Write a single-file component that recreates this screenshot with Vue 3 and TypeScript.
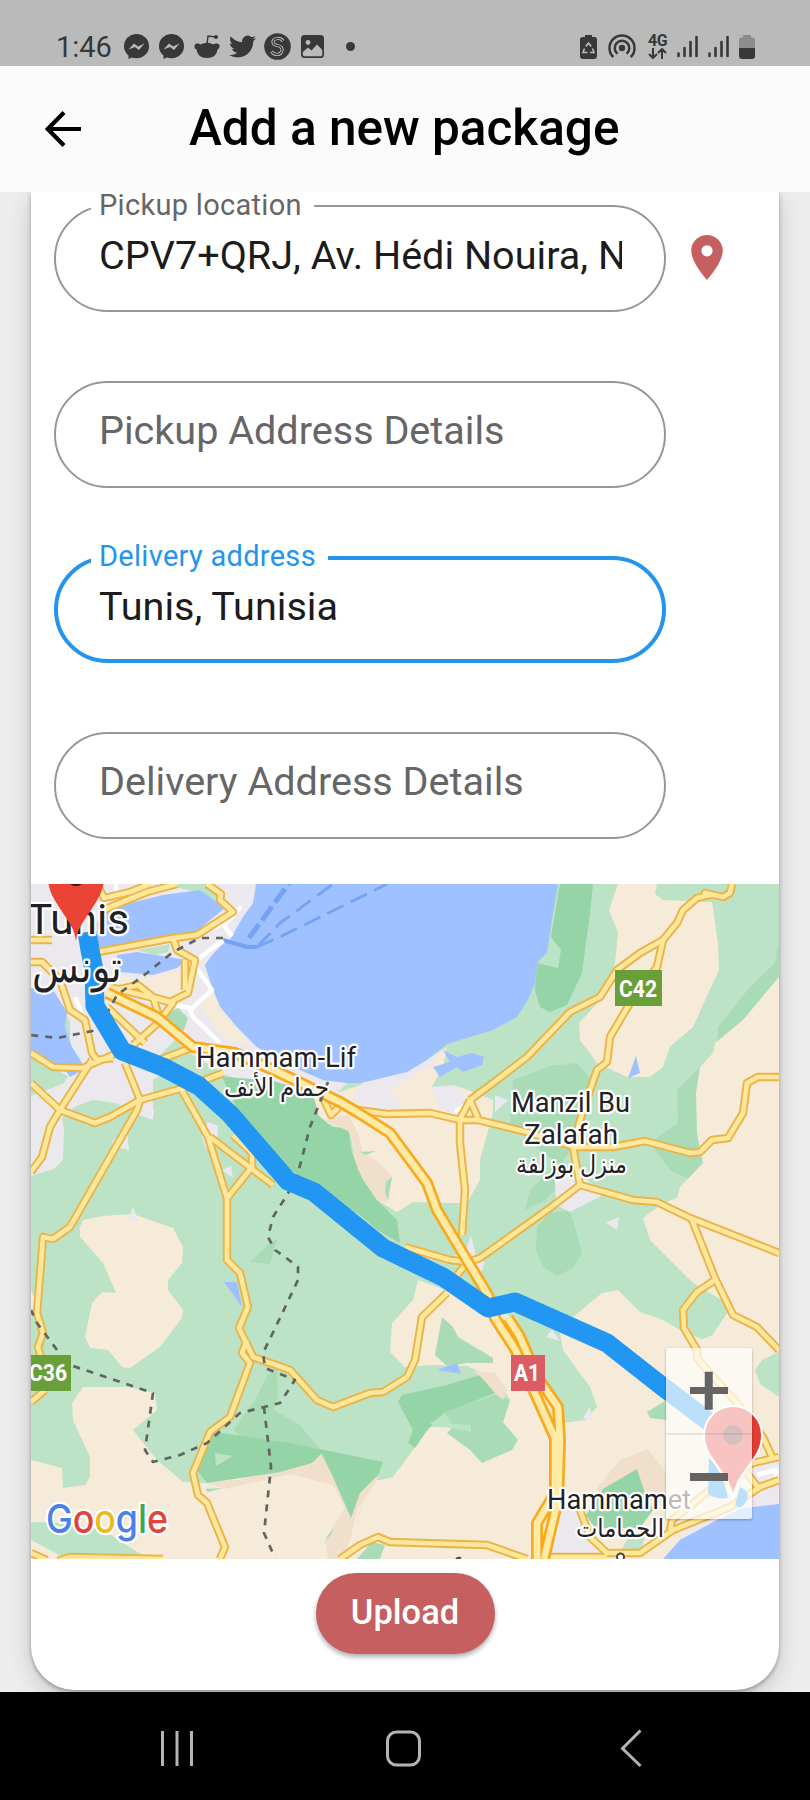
<script setup lang="ts">
interface Field {
  text: string
  label?: string
  active?: boolean
  filled?: boolean
  pin?: boolean
}

interface Shape {
  kind: string
  points: string
}

const fields: Field[] = [
  { text: 'CPV7+QRJ, Av. Hédi Nouira, Nabeul', label: 'Pickup location', filled: true, pin: true },
  { text: 'Pickup Address Details' },
  { text: 'Tunis, Tunisia', label: 'Delivery address', filled: true, active: true },
  { text: 'Delivery Address Details' },
]

const land: Shape[] = [
  { kind: 'urban', points: '31,884 262,884 256,905 243,917 230,940 205,965 212,987 237,1027 257,1047 300,1070 323,1080 347,1083 330,1100 280,1090 225,1075 190,1053 153,1080 153,1120 130,1112 93,1112 64,1130 63,1160 54,1169 31,1176' },
  { kind: 'green', points: '62,1118 76,1106 93,1100 115,1103 132,1110 120,1122 64,1130' },
  { kind: 'green', points: '31,1055 50,1067 68,1076 64,1083 42,1092 31,1096' },
  { kind: 'green', points: '163,884 212,884 222,905 200,893' },
  { kind: 'green', points: '137,950 170,944 168,952 155,955' },
  { kind: 'green', points: '64,1010 70,1022 70,1040 63,1030' },
  { kind: 'mid', points: '168,1013 178,1008 188,1018 184,1030 173,1030 167,1022' },
  { kind: 'green', points: '153,1062 175,1040 192,1055 192,1072 168,1068' },
  { kind: 'sand', points: '110,973 140,980 176,970 184,975 184,993 172,1000 150,990 118,988' },
  { kind: 'sand', points: '200,1005 212,990 226,1017 250,1045 225,1040' },
  { kind: 'sand', points: '360,1085 407,1072 447,1047 443,1067 432,1087 460,1087 493,1100 493,1113 480,1160 480,1180 467,1203 447,1203 413,1202 397,1212 377,1200 357,1170 350,1133 320,1120 313,1093 340,1092' },
  { kind: 'urban', points: '352,1100 362,1083 407,1072 443,1050 430,1067 390,1090 403,1107 388,1112' },
  { kind: 'urban', points: '432,1087 456,1085 466,1097 462,1118 440,1110' },
  { kind: 'forest', points: '222,1077 270,1080 313,1093 318,1115 332,1127 348,1128 352,1153 363,1180 377,1200 397,1220 400,1243 377,1230 360,1215 320,1192 285,1165 240,1115' },
  { kind: 'urban', points: '290,1072 323,1080 352,1102 320,1098' },
  { kind: 'dune', points: '324,1120 348,1115 358,1133 363,1153 380,1163 392,1177 387,1203 377,1200 358,1170 350,1132' },
  { kind: 'mid', points: '360,1152 376,1151 366,1155' },
  { kind: 'mid', points: '386,1182 392,1177 388,1200 385,1192' },
  { kind: 'forest', points: '560,884 593,884 590,913 582,973 567,1005 550,1012 540,1007 535,990 537,963 558,968 561,950 551,937' },
  { kind: 'sand', points: '618,884 657,884 655,894 663,900 712,902 718,943 719,970 702,1007 693,1027 670,1047 663,1067 650,1077 627,1077 597,1063 580,1040 579,1023 603,997 615,963 618,933 609,910' },
  { kind: 'mid', points: '779,943 779,977 743,1020 717,1043 718,1027 750,987 774,964' },
  { kind: 'mid', points: '700,1067 677,1090 678,1123 650,1143 670,1170 690,1180 703,1163 697,1133' },
  { kind: 'mid', points: '513,1080 550,1066 577,1063 590,1078 585,1130 560,1165 540,1150 510,1125' },
  { kind: 'mid', points: '552,1168 530,1190 525,1210 545,1200 565,1180' },
  { kind: 'sand', points: '779,977 743,1020 715,1043 713,1053 700,1067 696,1093 697,1133 703,1163 680,1187 677,1198 663,1203 643,1218 650,1240 693,1283 700,1297 727,1303 727,1313 712,1335 702,1339 680,1330 663,1320 640,1312 618,1290 602,1293 573,1317 560,1333 563,1350 590,1387 597,1407 585,1420 563,1423 550,1400 530,1350 505,1310 488,1305 418,1280 413,1300 392,1323 390,1352 405,1367 430,1365 467,1366 498,1380 510,1400 503,1422 480,1440 453,1427 430,1427 413,1450 393,1477 380,1480 365,1480 320,1470 280,1473 203,1483 183,1482 157,1460 133,1430 157,1410 155,1393 128,1387 110,1387 83,1387 72,1403 73,1420 90,1457 90,1477 85,1485 63,1488 62,1468 31,1460 31,1559 779,1559' },
  { kind: 'green', points: '693,1283 727,1303 727,1313 712,1335 702,1339 680,1330 684,1300' },
  { kind: 'sand', points: '80,1227 83,1220 103,1216 133,1214 173,1228 183,1247 182,1263 168,1280 168,1290 183,1310 182,1318 160,1347 130,1368 122,1367 108,1350 90,1348 85,1337 92,1303 102,1292 116,1293 103,1263 80,1237' },
  { kind: 'sand', points: '31,1290 35,1300 33,1312 31,1315' },
  { kind: 'urban', points: '128,1220 133,1207 139,1222' },
  { kind: 'urban', points: '112,1142 127,1128 129,1150 115,1147' },
  { kind: 'urban', points: '202,1137 208,1122 218,1126 217,1140 206,1149' },
  { kind: 'urban', points: '222,1170 231,1166 233,1178' },
  { kind: 'urban', points: '136,1110 154,1110 154,1116' },
  { kind: 'green', points: '31,1522 63,1523 103,1530 147,1558 63,1557 31,1540' },
  { kind: 'green', points: '200,1432 230,1415 310,1423 383,1462 383,1478 320,1452 203,1483' },
  { kind: 'mid', points: '233,1430 255,1400 267,1376 277,1366 278,1395 274,1410 300,1425 320,1449 290,1443 240,1436' },
  { kind: 'dune', points: '205,1482 240,1480 320,1452 333,1477 352,1515 365,1480 380,1476 357,1510 350,1540 345,1559 328,1559 325,1540 345,1508 333,1485 290,1474 225,1489' },
  { kind: 'forest', points: '215,1432 290,1443 383,1462 378,1475 360,1493 351,1518 333,1477 322,1453 312,1463 280,1472 207,1483 197,1470 202,1448' },
  { kind: 'green', points: '215,1453 233,1456 216,1466' },
  { kind: 'mid', points: '205,1489 223,1488 208,1492' },
  { kind: 'mid', points: '360,1510 363,1498 356,1528' },
  { kind: 'mid', points: '325,1540 334,1527 331,1535' },
  { kind: 'mid', points: '357,1559 372,1542 385,1545 380,1559' },
  { kind: 'forest', points: '398,1402 402,1395 447,1385 480,1375 495,1393 447,1412 427,1430 415,1448 408,1443 413,1430' },
  { kind: 'mid', points: '442,1413 495,1395 510,1400 503,1422 518,1440 512,1450 482,1463 470,1450 447,1433 453,1427' },
  { kind: 'green', points: '430,1424 445,1413 452,1424 471,1425 471,1432 450,1428' },
  { kind: 'mid', points: '442,1317 453,1327 458,1337 493,1358 493,1363 467,1363 447,1366 435,1355' },
  { kind: 'dune', points: '472,1371 495,1373 507,1390 503,1400 496,1394 480,1376' },
  { kind: 'mid', points: '537,1227 550,1213 570,1210 576,1230 582,1253 573,1268 557,1276 543,1267 536,1250' },
  { kind: 'urban', points: '555,1180 577,1172 605,1194 570,1212 556,1205' },
  { kind: 'urban', points: '606,1223 619,1217 617,1230' },
  { kind: 'urban', points: '546,1337 552,1330 560,1341' },
  { kind: 'urban', points: '583,1418 590,1407 592,1421' },
  { kind: 'urban', points: '495,1095 508,1100 495,1112' },
  { kind: 'urban', points: '455,1255 466,1250 471,1236 476,1256 485,1262 481,1272 462,1266' },
  { kind: 'green', points: '348,1285 358,1277 357,1293' },
  { kind: 'mid', points: '250,1262 268,1245 278,1238 270,1264' },
  { kind: 'dune', points: '597,1488 620,1460 648,1449 668,1475 668,1510 650,1500 600,1500' },
  { kind: 'forest', points: '603,1489 637,1469 645,1493 653,1510 640,1528 595,1528 586,1515' },
  { kind: 'mid', points: '647,1412 667,1400 667,1420 650,1418' },
  { kind: 'green', points: '755,1370 762,1360 779,1352 779,1397 760,1384' },
  { kind: 'urban', points: '562,1500 580,1518 592,1540 605,1559 547,1559' },
  { kind: 'urban', points: '663,1559 690,1525 740,1500 750,1470 779,1458 779,1504 743,1508' },
  { kind: 'green', points: '630,1535 645,1535 640,1555 620,1552' },
  { kind: 'water', points: '256,884 253,903 243,917 230,940 222,945 212,955 205,965 212,987 220,1007 237,1027 257,1047 300,1070 323,1080 347,1083 360,1083 407,1072 427,1060 447,1044 493,1030 517,1017 528,1000 535,983 537,963 547,952 552,920 558,884' },
  { kind: 'water', points: '102,910 163,895 200,890 225,908 210,920 197,932 170,935 98,948 97,923' },
  { kind: 'water', points: '117,955 137,952 187,960 177,968 153,975 120,972' },
  { kind: 'water', points: '31,988 53,990 67,1012 65,1027 72,1047 82,1063 83,1070 70,1077 63,1067 47,1065 31,1053' },
  { kind: 'water', points: '433,1067 450,1062 443,1050 457,1057 472,1053 484,1057 482,1065 463,1072 457,1067 440,1077' },
  { kind: 'water', points: '628,1078 636,1056 640,1073' },
  { kind: 'water', points: '224,1282 237,1282 242,1307' },
  { kind: 'water', points: '437,1370 457,1363 461,1374' },
  { kind: 'water', points: '663,1559 680,1540 717,1520 743,1508 779,1504 779,1559' },
]

const whiteRoads: string[] = [
  '223,940 193,963 212,990 190,1010 193,1017 220,1043',
  '75,997 83,1017',
  '197,935 217,927 240,908 224,926 232,936',
  '455,1112 464,1106',
  '165,1003 190,1008',
  '116,884 116,895',
  '560,1505 556,1530 549,1550',
  '757,1475 776,1470 776,1480',
]

const roads: string[] = [
  '125,1063 140,1100 137,1110 70,1227 53,1239 43,1237 37,1313 43,1333 38,1347 41,1357',
  '45,1390 31,1402',
  '31,1083 60,1110 95,1123 110,1117 140,1100 187,1087 223,1073',
  '180,1087 193,1110 208,1137 227,1198 227,1260 240,1273 248,1307 239,1328 253,1357 290,1370 317,1400 333,1407 370,1393 383,1392 407,1377 415,1360 422,1317 447,1293',
  '247,1340 242,1353 250,1363 230,1417 210,1432 193,1473 198,1495 207,1503 225,1547 220,1559',
  '210,1137 273,1185',
  '228,1197 252,1167 252,1153 233,1135',
  '470,1100 493,1083 527,1057 570,1012 600,997 617,970 640,953 663,940 677,923 683,910 697,898 710,895 705,893 723,897 730,893 732,884',
  '663,940 657,967 630,1003 610,1037 607,1062 597,1070 590,1090 580,1120 573,1147 580,1185',
  '357,1110 387,1114 430,1113 460,1120 478,1120 527,1132 575,1147 613,1147 645,1141 690,1153 700,1152 712,1140 728,1138 743,1113 747,1083 758,1077 779,1077',
  '470,1100 460,1119 460,1143 465,1190 462,1235',
  '470,1100 478,1118',
  '324,1100 331,1115 343,1103',
  '468,1262 480,1258 550,1208 580,1185 633,1200 657,1202 690,1218 779,1253',
  '692,1220 715,1278 733,1315 757,1327 779,1350',
  '715,1280 697,1292 683,1310 684,1328 697,1350 697,1358 707,1370 737,1403 763,1437 772,1457',
  '405,1247 450,1260 468,1262 457,1275',
  '340,1559 360,1545 378,1537 390,1542 487,1545 527,1559',
  '31,1553 47,1560',
  '58,1561 70,1557 163,1559',
  '580,1510 590,1537 607,1553 640,1553 673,1530 730,1507 760,1487 779,1480',
  '547,1557 607,1557',
  '670,1530 672,1520 710,1490 753,1463 779,1457',
  '747,1473 760,1490',
  '98,952 173,938 197,935 233,912 220,900 221,894 207,884',
  '173,938 177,950 195,960 188,993 170,1002 153,997 138,985 115,990',
  '185,960 185,990',
  '103,910 147,892 177,884',
  '97,884 104,898 130,892 150,884',
  '107,1007 145,1043',
  '110,987 173,1003 158,1023 133,1045',
  '153,997 160,1020',
  '31,962 42,962 60,980 70,1010 85,1020 92,1053 97,1060 113,1058',
  '31,940 52,940',
  '31,1053 53,1067 83,1068 117,1053',
  '92,1060 60,1110 50,1127 42,1157 31,1172',
  '193,1047 160,1060',
]

const highways: string[] = [
  '107,993 157,1017 193,1047 235,1053 280,1073 340,1102 357,1112 390,1133 427,1183 437,1210 468,1262 488,1295 495,1318 515,1349 555,1438 555,1493 537,1523 537,1559',
  '508,1318 519,1335 538,1378 558,1407 560,1440 558,1500 544,1559',
]

const borders: string[] = [
  '223,938 200,938 173,952 147,973 117,995 110,1008 97,1030 57,1038 31,1035',
  '328,1082 310,1127 297,1177 287,1195 273,1217 268,1237 275,1250 285,1257 298,1267 298,1280 280,1318 263,1353 265,1368 295,1380 280,1403 264,1407 240,1413 207,1443 180,1455 153,1462 145,1450 153,1393 70,1365',
  '57,1350 37,1323 31,1310',
  '264,1407 271,1467 264,1533 275,1558',
]

const ferries: string[] = [
  '258,946 280,923 333,884',
  '257,947 280,937 387,884',
]

const route = '87,932 90,950 94,970 95,1006 122,1051 163,1067 199,1086 230,1114 288,1181 314,1192 383,1248 443,1277 488,1308 515,1302 607,1343 663,1387 712,1424 735,1442'
</script>

<template>
  <div class="screen">
    <header class="status">
      <span class="clock">1:46</span>
      <svg v-for="n in 2" :key="n" class="glyph messenger" viewBox="0 0 25 25">
        <path d="M12.5 0A12 12 0 0 1 25 12.200A12 12 0 0 1 12.500 24.200Q9.500 24.200 7.800 23.500L4.500 25V21.500A12 12 0 0 1 0 12.200A12 12 0 0 1 12.500 0Z" fill="#383838" />
        <path d="M4.500 15.500L10 9.500L14 12.500L20.500 9.500L15 16L11 13Z" fill="#bababa" />
      </svg>
      <svg class="glyph reddit" viewBox="0 0 26 25">
        <path d="M2.500 9.500Q5 9 6.500 10.500Q9.500 8.800 13 8.800T19.500 10.500Q21 9 23.500 9.500Q26 10.500 25.500 13Q25 15 23.500 15.500Q22.500 24 13 24T2.500 15.500Q1 15 0.500 13Q0 10.500 2.500 9.500Z" fill="#383838" />
        <path d="M13 10L14 2L22 3" fill="none" stroke="#383838" stroke-width="1.500" />
        <circle cx="22" cy="3" r="2" fill="#383838" />
      </svg>
      <svg class="glyph twitter" viewBox="0 2 24 20">
        <path fill="#383838" d="M23.950 4.570a10 10 0 0 1-2.820.775 4.960 4.960 0 0 0 2.160-2.723c-.950.555-2.005.959-3.127 1.184a4.920 4.920 0 0 0-8.384 4.482C7.690 8.095 4.067 6.130 1.640 3.162a4.820 4.820 0 0 0-.666 2.475c0 1.710.870 3.213 2.188 4.096a4.900 4.900 0 0 1-2.228-.616v.060a4.920 4.920 0 0 0 3.946 4.827 5 5 0 0 1-2.212.085 4.940 4.940 0 0 0 4.604 3.417 9.870 9.870 0 0 1-6.102 2.105c-.390 0-.779-.023-1.170-.067a14 14 0 0 0 7.557 2.209c9.053 0 13.998-7.496 13.998-13.985 0-.210 0-.420-.015-.630a9.900 9.900 0 0 0 2.460-2.548z" />
      </svg>
      <svg class="glyph coin" viewBox="0 0 27 27">
        <circle cx="13.500" cy="13.500" r="13.300" fill="#383838" />
        <path d="M19 8Q17 5 13.500 5.500Q8.500 6 9 9.500Q9.500 12 13.500 12.500Q18.500 13.500 18 17.500Q17 21.500 13 21.500Q9.500 21.500 7.500 18.500" fill="none" stroke="#bababa" stroke-width="3.200" />
        <path d="M19 8Q17 5 13.500 5.500Q8.500 6 9 9.500Q9.500 12 13.500 12.500Q18.500 13.500 18 17.500Q17 21.500 13 21.500Q9.500 21.500 7.500 18.500" fill="none" stroke="#383838" stroke-width="1.300" />
      </svg>
      <svg class="glyph photo" viewBox="0 0 23 23">
        <rect width="23" height="23" rx="3.500" fill="#383838" />
        <circle cx="7" cy="7.500" r="2.400" fill="#bababa" />
        <path d="M1.800 17L7 12.500L10.500 15.500L16 9.500L21.300 15V19.500Q21.300 21.300 19.500 21.300H3.500Q1.800 21.300 1.800 19.500Z" fill="#bababa" />
      </svg>
      <span class="dot"></span>
      <span class="spacer"></span>
      <svg class="saver" viewBox="0 0 17 24">
        <path d="M5 0H12V2H14.500Q17 2 17 4.500V21Q17 24 14 24H3Q0 24 0 21V4.500Q0 2 2.500 2H5Z" fill="#383838" />
        <path d="M5.800 11.500L8.500 8L11.200 11.500M12.500 13.500L14 17.500H10M7.500 17.500H3L4.500 13.500" fill="none" stroke="#bababa" stroke-width="1.600" />
      </svg>
      <svg class="hotspot" viewBox="0 0 28 25" fill="none" stroke="#383838" stroke-width="2.500">
        <circle cx="14" cy="14" r="3.200" fill="#383838" stroke="none" />
        <path d="M9.500 19.800A7.300 7.300 0 1 1 18.500 19.800M5.300 23A12.500 12.500 0 1 1 22.700 23" />
      </svg>
      <div class="network">
        <span>4G</span>
        <svg viewBox="0 0 19 11" fill="none" stroke="#383838" stroke-width="2"><path d="M5 0V10M1 6L5 10L9 6M14 11V1M10 5L14 1L18 5" /></svg>
      </div>
      <svg v-for="n in 2" :key="n" class="signal" viewBox="0 0 21 23" stroke="#383838" stroke-width="2.600" stroke-linecap="round">
        <path d="M1.500 18.500V21M7.500 13V21M13.500 7V21M19.500 2V21" />
      </svg>
      <svg class="battery" viewBox="0 0 16 24">
        <path d="M4 0H12V2.500H14Q16 2.500 16 4.500V13H0V4.500Q0 2.500 2 2.500H4Z" fill="#8c8c8c" />
        <path d="M0 13H16V21Q16 24 13 24H3Q0 24 0 21Z" fill="#383838" />
      </svg>
    </header>

    <div class="appbar">
      <svg class="back" viewBox="0 0 36 36" fill="none" stroke="#000" stroke-width="4.200"><path d="M36 18H3M19 1.500L2.700 18L19 34.500" /></svg>
      <h1>Add a new package</h1>
    </div>

    <main class="content">
      <section class="card">
        <div class="form">
          <div v-for="f in fields" :key="f.text" class="row">
            <div class="field" :class="{ active: f.active, filled: f.filled }">
              <span v-if="f.label" class="label">{{ f.label }}</span>
              <span class="value">{{ f.text }}</span>
            </div>
            <svg v-if="f.pin" class="place" viewBox="5 2 14 20">
              <path fill="#c66060" d="M12 2C8.130 2 5 5.130 5 9c0 5.250 7 13 7 13s7-7.750 7-13c0-3.870-3.130-7-7-7zm0 9.500a2.500 2.500 0 0 1 0-5 2.500 2.500 0 0 1 0 5z" />
            </svg>
          </div>
        </div>

        <div class="map">
          <svg class="canvas" viewBox="31 884 748 675">
            <rect class="green" x="31" y="884" width="748" height="675" />
            <polygon v-for="(s, i) in land" :key="i" :class="s.kind" :points="s.points" />
            <g class="lines">
              <polyline class="ferry-port" points="223,940 247,947 257,947" />
              <polyline class="ferry-main" points="249,938 290,882" />
              <polyline v-for="p in ferries" :key="p" class="ferry" :points="p" />
              <polyline v-for="p in whiteRoads" :key="p" class="white-road" :points="p" />
              <polyline v-for="p in roads" :key="p" class="road-edge" :points="p" />
              <polyline v-for="p in roads" :key="p" class="road" :points="p" />
              <polyline v-for="p in highways" :key="p" class="highway-edge" :points="p" />
              <polyline v-for="p in highways" :key="p" class="highway" :points="p" />
              <polyline v-for="p in borders" :key="p" class="border" :points="p" />
              <polyline class="route" :points="route" />
            </g>
            <path d="M709 1458Q722 1470 728 1498Q712 1500 708 1493ZM740 1487Q748 1490 748 1497Q742 1512 735 1505Z" fill="#2196f3" />

            <rect x="615" y="970" width="47" height="36" fill="#689f38" />
            <rect x="31" y="1355" width="40" height="36" fill="#689f38" />
            <rect x="511" y="1355" width="34" height="36" fill="#db5c62" />
            <g class="shield">
              <text x="619" y="997" textLength="38" lengthAdjust="spacingAndGlyphs">C42</text>
              <text x="29" y="1381" textLength="38" lengthAdjust="spacingAndGlyphs">C36</text>
              <text x="514" y="1381" textLength="26" lengthAdjust="spacingAndGlyphs">A1</text>
            </g>

            <circle cx="620.500" cy="1557" r="3.500" fill="#fff" stroke="#444" stroke-width="2" />
            <path d="M456 1559Q458 1557 461 1558" fill="none" stroke="#444" stroke-width="2" />
            <g class="place-name">
              <text class="city" x="27" y="934" textLength="102" lengthAdjust="spacingAndGlyphs">Tunis</text>
              <text class="city" x="32" y="982" direction="ltr" textLength="90" lengthAdjust="spacingAndGlyphs">تونس</text>
              <text x="196" y="1066.500" textLength="160" lengthAdjust="spacingAndGlyphs">Hammam-Lif</text>
              <text class="arabic" x="224" y="1096" direction="ltr" textLength="105" lengthAdjust="spacingAndGlyphs">حمام الأنف</text>
              <text x="511" y="1112" textLength="119" lengthAdjust="spacingAndGlyphs">Manzil Bu</text>
              <text x="524" y="1144" textLength="94" lengthAdjust="spacingAndGlyphs">Zalafah</text>
              <text class="arabic" x="516" y="1173" direction="ltr" textLength="111" lengthAdjust="spacingAndGlyphs">منزل بوزلفة</text>
              <text x="547" y="1509" textLength="144" lengthAdjust="spacingAndGlyphs">Hammamet</text>
              <text class="arabic" x="576" y="1537" direction="ltr" textLength="88" lengthAdjust="spacingAndGlyphs">الحمامات</text>
            </g>

            <g stroke-linejoin="round">
              <path d="M76 941C74 927 68 921 61 910S48 891 48 877A28 28 0 0 1 104 877C104 891 98 899 91 910S78 927 76 941Z" fill="#ea4335" />
              <circle cx="76" cy="876" r="10" fill="#3b0e0b" />
              <path d="M733 1499C731 1485 726 1478 718 1467S704 1449 704 1435A29 29 0 0 1 762 1435C762 1449 756 1456 748 1467S735 1485 733 1499Z" fill="#e53b35" stroke="#fff" stroke-width="2" />
              <circle cx="733" cy="1435" r="10" fill="#7d2a28" />
            </g>

            <text class="google" x="46" y="1533" textLength="122" lengthAdjust="spacingAndGlyphs"><tspan fill="#4a80e8">G</tspan><tspan fill="#e0443a">o</tspan><tspan fill="#ecb921">o</tspan><tspan fill="#4a80e8">g</tspan><tspan fill="#3aa757">l</tspan><tspan fill="#e0443a">e</tspan></text>
          </svg>
          <div class="zoom">
            <span class="zoom-key"><i class="bar"></i><i class="bar upright"></i></span>
            <span class="zoom-key"><i class="bar"></i></span>
          </div>
        </div>

        <button class="upload" type="button">Upload</button>
      </section>
    </main>

    <nav class="navbar">
      <svg viewBox="0 0 810 108" fill="none" stroke="#b4b4b4" stroke-width="3">
        <path d="M162.500 39V74M177 39V74M191.500 39V74" />
        <rect x="387.500" y="40" width="32" height="33" rx="9" />
        <path d="M640.500 38.500L622.500 56.500L640.500 74" />
      </svg>
    </nav>
  </div>
</template>

<style>
body {
  margin: 0;
}
</style>

<style scoped>
.screen {
  width: 810px;
  height: 1800px;
  display: flex;
  flex-direction: column;
  background: #ededed;
  font-family: Roboto, "Liberation Sans", sans-serif;
  overflow: hidden;
}
.status {
  height: 66px;
  flex: none;
  box-sizing: border-box;
  padding: 27px 55px 0 56px;
  display: flex;
  align-items: center;
  background: #bababa;
  color: #383838;
}
.clock {
  width: 68px;
  font-size: 29px;
  line-height: 38px;
}
.glyph {
  flex: none;
}
.messenger {
  width: 25px;
  height: 25px;
  margin-right: 10px;
}
.reddit {
  width: 26px;
  height: 25px;
  margin-right: 9px;
}
.twitter {
  width: 27px;
  height: 23px;
  margin-right: 8px;
}
.coin {
  width: 27px;
  height: 27px;
  margin-right: 10px;
}
.photo {
  width: 23px;
  height: 23px;
}
.dot {
  width: 9px;
  height: 9px;
  margin-left: 22px;
  border-radius: 50%;
  background: #383838;
}
.spacer {
  flex: 1;
}
.saver {
  width: 17px;
  height: 24px;
  margin-right: 11px;
}
.hotspot {
  width: 28px;
  height: 25px;
  margin-right: 12px;
}
.network {
  width: 19px;
  margin-right: 10px;
  display: flex;
  flex-direction: column;
  font-size: 16px;
  font-weight: 700;
  line-height: 14px;
  letter-spacing: -0.500px;
}
.network svg {
  width: 19px;
  height: 11px;
}
.signal {
  width: 21px;
  height: 23px;
  margin-right: 10px;
}
.battery {
  width: 16px;
  height: 24px;
}
.appbar {
  height: 126px;
  flex: none;
  display: flex;
  align-items: center;
  background: #fbfbfb;
}
.back {
  width: 36px;
  height: 36px;
  margin-left: 45px;
}
h1 {
  margin: -2px 0 0 108px;
  font-size: 49.500px;
  font-weight: 500;
  color: #000;
  white-space: nowrap;
}
.content {
  flex: 1;
  overflow: hidden;
}
.card {
  height: 1498px;
  margin: 0 31px;
  display: flex;
  flex-direction: column;
  align-items: center;
  background: #fff;
  border-radius: 0 0 44px 44px;
  box-shadow: 0 2px 4px rgba(0, 0, 0, 0.300), 0 8px 24px rgba(0, 0, 0, 0.160);
}
.form {
  width: 100%;
  height: 692px;
  box-sizing: border-box;
  padding: 13px 0 0 23px;
  display: flex;
  flex-direction: column;
  gap: 68.500px;
}
.row {
  display: flex;
  align-items: center;
  gap: 24.500px;
}
.field {
  position: relative;
  width: 612px;
  height: 107px;
  box-sizing: border-box;
  padding: 0 42px 6px 43px;
  display: flex;
  align-items: center;
  border: 2px solid #979797;
  border-radius: 54px;
  color: #666;
}
.field.active {
  padding: 0 40px 6px 41px;
  border: 4px solid #2494ec;
}
.label {
  position: absolute;
  top: -19px;
  left: 35px;
  padding: 0 12px 0 8px;
  background: #fff;
  font-size: 29px;
  line-height: 34px;
  letter-spacing: 0.300px;
  white-space: nowrap;
}
.active .label {
  top: -21px;
  left: 33px;
  color: #2494ec;
}
.value {
  width: 100%;
  overflow: hidden;
  font-size: 39.600px;
  line-height: 48px;
  white-space: nowrap;
}
.filled .value {
  color: #1c1c1c;
}
.place {
  width: 32px;
  height: 45px;
  margin-top: -2px;
}
.map {
  position: relative;
  width: 100%;
  height: 675px;
  flex: none;
}
.canvas {
  display: block;
  width: 100%;
  height: 675px;
}
.green { fill: #bce3c6; }
.mid { fill: #a9dcb6; }
.forest { fill: #94d4a6; }
.sand { fill: #f6ead8; }
.dune { fill: #efdfcb; }
.urban { fill: #ece9ee; }
.water { fill: #9fc1ff; }
.lines {
  fill: none;
  stroke-linejoin: round;
}
.ferry,
.ferry-main,
.ferry-port {
  stroke: #73a3f2;
}
.ferry {
  stroke-width: 2.800;
  stroke-dasharray: 18 8;
}
.ferry-main {
  stroke-width: 5;
  stroke-dasharray: 17 5;
}
.ferry-port { stroke-width: 4; }
.white-road { stroke: #fff; stroke-width: 4.500; }
.road-edge { stroke: #eab448; stroke-width: 8.400; }
.road { stroke: #ffe79c; stroke-width: 4.600; }
.highway-edge { stroke: #f8a91c; stroke-width: 12; }
.highway { stroke: #ffeaa6; stroke-width: 6.600; }
.border {
  stroke: #606560;
  stroke-width: 2.700;
  stroke-dasharray: 7 7;
}
.route { stroke: #2196f3; stroke-width: 19; }
.place-name,
.google {
  stroke: #fff;
  stroke-width: 4.500;
  stroke-linejoin: round;
  paint-order: stroke;
}
.place-name {
  fill: #1e2125;
  font-size: 28px;
}
.city { font-size: 43px; }
.arabic {
  font-family: "Noto Sans", "DejaVu Sans", sans-serif;
  font-size: 25px;
}
.shield {
  fill: #fff;
  font-size: 24px;
  font-weight: 700;
}
.google {
  font-family: Inter, sans-serif;
  font-size: 39px;
  font-weight: 500;
}
.zoom {
  position: absolute;
  top: 464px;
  right: 27px;
  width: 86px;
  height: 171px;
  display: flex;
  flex-direction: column;
  background: rgba(255, 255, 255, 0.700);
  border-radius: 2px;
  box-shadow: 0 1px 3px rgba(0, 0, 0, 0.280);
}
.zoom-key {
  flex: 1;
  display: grid;
  place-items: center;
}
.zoom-key + .zoom-key {
  border-top: 2px solid rgba(120, 120, 120, 0.160);
}
.bar {
  grid-area: 1 / 1;
  width: 38px;
  height: 7.500px;
  background: #646464;
}
.upright {
  transform: rotate(90deg);
}
.upload {
  width: 179px;
  height: 81px;
  margin-top: 14px;
  padding: 0 0 3px;
  border: 0;
  border-radius: 40px;
  background: #c66060;
  color: #fff;
  font-family: inherit;
  font-size: 34.500px;
  font-weight: 500;
  box-shadow: 0 3px 5px rgba(0, 0, 0, 0.320);
}
.navbar {
  height: 108px;
  flex: none;
  background: #000;
}
.navbar svg {
  display: block;
  width: 810px;
  height: 108px;
}
</style>
